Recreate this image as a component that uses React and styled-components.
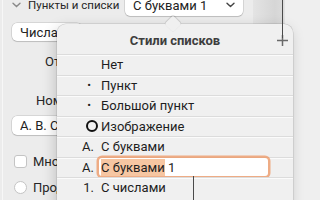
import React from 'react';
import styled, { createGlobalStyle } from 'styled-components';

const GlobalStyle = createGlobalStyle`
  html, body { margin: 0; padding: 0; }
  body {
    width: 320px;
    height: 200px;
    overflow: hidden;
    background: #ececec;
    font-family: Roboto, Inter, "Liberation Sans", sans-serif;
    -webkit-font-smoothing: antialiased;
  }
`;

const Screen = styled.div`
  position: relative;
  width: 320px;
  height: 200px;
  overflow: hidden;
  display: flex;
  background: #ececec;
`;

const Inspector = styled.div`
  width: 250px;
  flex: none;
  margin-left: 2px;
  border-left: 1px solid #f7f7f7;
  display: flex;
  flex-direction: column;
`;

const Gutter = styled.div`
  width: 31px;
  flex: none;
  background: linear-gradient(to right, #e4e4e4, #d6d6d6 70%, #dcdcdc);
`;

const Edge = styled.div`
  flex: 1;
  background: #efefef;
  border-left: 1px solid #e2e2e2;
`;

const Row = styled.div`
  height: 20px;
  margin-top: ${p => p.$gap}px;
  display: flex;
  align-items: center;
  gap: ${p => p.$spacing || 0}px;
  padding-left: ${p => p.$indent}px;
  font-size: 13px;
  color: #262626;
  white-space: nowrap;
`;

/* labels that run under the popover are cut where the popover starts */
const Label = styled.span`
  flex: none;
  ${p => (p.$w ? `width: ${p.$w}px;` : '')}
  ${p => (p.$max ? `max-width: ${p.$max}px; overflow: hidden;` : '')}
  ${p => (p.$size ? `font-size: ${p.$size}px;` : '')}
  white-space: nowrap;
`;

const Chevron = styled.svg`
  width: 9px;
  height: 6px;
  margin-right: 7px;
`;

const PopupButton = styled.div`
  box-sizing: border-box;
  width: ${p => p.$w}px;
  height: ${p => p.$h || 20}px;
  padding: 0 8px;
  display: flex;
  align-items: center;
  justify-content: space-between;
  background: #fff;
  border-radius: 5px;
  box-shadow: 0 0 0 0.5px rgba(0, 0, 0, 0.18), 0 1px 1px rgba(0, 0, 0, 0.12);
  font-size: 13px;
  color: #222;
`;

const Check = styled.div`
  box-sizing: border-box;
  width: 13px;
  height: 13px;
  flex: none;
  background: #fff;
  border: 1px solid #c4c4c4;
  border-radius: ${p => (p.$round ? '50%' : '3px')};
`;

const Popover = styled.div`
  position: absolute;
  left: 57px;
  top: 24px;
  width: 236px;
  height: 200px;
  background: #f0f0f0;
  border-radius: 9px;
  box-shadow: 0 0 0 0.5px rgba(0, 0, 0, 0.16), -2px 4px 14px rgba(0, 0, 0, 0.18);
  display: flex;
  flex-direction: column;
`;

const Arrow = styled.div`
  position: absolute;
  top: -6px;
  left: 110px;
  width: 12px;
  height: 12px;
  background: #f0f0f0;
  transform: rotate(45deg);
  border-radius: 2px;
  box-shadow: -0.5px -0.5px 0 0.5px rgba(0, 0, 0, 0.12);
`;

const Header = styled.div`
  position: relative;
  height: 30px;
  padding-top: 2px;
  box-sizing: border-box;
  display: flex;
  align-items: center;
  justify-content: center;
  font-size: 13px;
  font-weight: 700;
  color: #3e3e3e;
`;

const Plus = styled.svg`
  position: absolute;
  right: 4px;
  top: 10px;
  width: 13px;
  height: 13px;
`;

const Item = styled.div`
  height: 20.5px;
  box-sizing: border-box;
  border-top: 1px solid #dcdcdc;
  box-shadow: inset 0 1px 0 #fbfbfb;
  display: flex;
  align-items: center;
  font-size: 13px;
  color: #1e1e1e;
  white-space: nowrap;
`;

const Marker = styled.span`
  width: 44px;
  flex: none;
  box-sizing: border-box;
  padding-right: ${p => p.$pad}px;
  display: flex;
  justify-content: flex-end;
  align-items: center;
  font-size: ${p => p.$size || 13}px;
`;

const Ring = styled.span`
  width: 12px;
  height: 12px;
  box-sizing: border-box;
  border: 2px solid #111;
  border-radius: 50%;
`;

const Field = styled.div`
  margin-left: -2px;
  width: 169px;
  height: 18px;
  box-sizing: border-box;
  padding-left: 2px;
  display: flex;
  align-items: center;
  background: #fff;
  border-radius: 3px;
  box-shadow: 0 0 0 2.5px rgba(238, 150, 98, 0.75);
`;

const Selected = styled.span`
  background: #f6c6a2;
  padding: 1px 0;
`;

const Callout = styled.div`
  position: absolute;
  left: ${p => p.$x}px;
  top: ${p => p.$top}px;
  width: 1px;
  height: ${p => p.$h}px;
  background: #4a4a4a;
`;

const items = [
  { marker: null, label: 'Нет' },
  { marker: '•', pad: 10, size: 11, label: 'Пункт' },
  { marker: '•', pad: 10, size: 11, label: 'Большой пункт' },
  { marker: 'ring', pad: 3, label: 'Изображение' },
  { marker: 'А.', pad: 7, label: 'С буквами' },
  { marker: 'А.', pad: 7, label: 'С буквами 1', editing: true },
  { marker: '1.', pad: 7, label: 'С числами' },
];

const DownChevron = () => (
  <svg width="9" height="6" viewBox="0 0 9 6">
    <path d="M1 1.2 4.5 4.6 8 1.2" fill="none" stroke="#444" strokeWidth="1.4" strokeLinecap="round" strokeLinejoin="round" />
  </svg>
);

export default function App() {
  return (
    <>
      <GlobalStyle />
      <Screen>
        <Inspector>
          <Row $gap={-5} $indent={9}>
            <Chevron viewBox="0 0 9 6">
              <path d="M1 1.2 4.5 4.6 8 1.2" fill="none" stroke="#8a8a8a" strokeWidth="1.4" strokeLinecap="round" />
            </Chevron>
            <Label $w={97} $size={11.5}>Пункты и списки</Label>
            <PopupButton $w={118} $h={21}>
              С буквами 1
              <DownChevron />
            </PopupButton>
          </Row>
          <Row $gap={7} $indent={9}>
            <PopupButton $w={70} $h={18}>Числа</PopupButton>
          </Row>
          <Row $gap={9} $indent={42}>
            <Label $max={16}>Отступ</Label>
          </Row>
          <Row $gap={19} $indent={33}>
            <Label $max={25}>Номер</Label>
          </Row>
          <Row $gap={5} $indent={9}>
            <PopupButton $w={70} $h={19}>
              <Label $max={40}>А. В. С. D.</Label>
            </PopupButton>
          </Row>
          <Row $gap={16} $indent={11} $spacing={6}>
            <Check />
            <Label $max={27}>Многоуровневая</Label>
          </Row>
          <Row $gap={6} $indent={11} $spacing={6}>
            <Check $round />
            <Label $max={27}>Продолжить</Label>
          </Row>
        </Inspector>
        <Gutter />
        <Edge />
        <Popover>
          <Arrow />
          <Header>
            Стили списков
            <Plus viewBox="0 0 13 13">
              <path d="M6.5 1v11M1 6.5h11" stroke="#6a6a6a" strokeWidth="1.5" />
            </Plus>
          </Header>
          {items.map(it => (
            <Item key={it.label}>
              <Marker $pad={it.pad} $size={it.size}>
                {it.marker === 'ring' ? <Ring /> : it.marker}
              </Marker>
              {it.editing ? (
                <Field>
                  <Selected>С буквами</Selected>&nbsp;1
                </Field>
              ) : (
                it.label
              )}
            </Item>
          ))}
        </Popover>
        <Callout $x={282} $top={0} $h={38} />
        <Callout $x={193} $top={176} $h={30} />
      </Screen>
    </>
  );
}
